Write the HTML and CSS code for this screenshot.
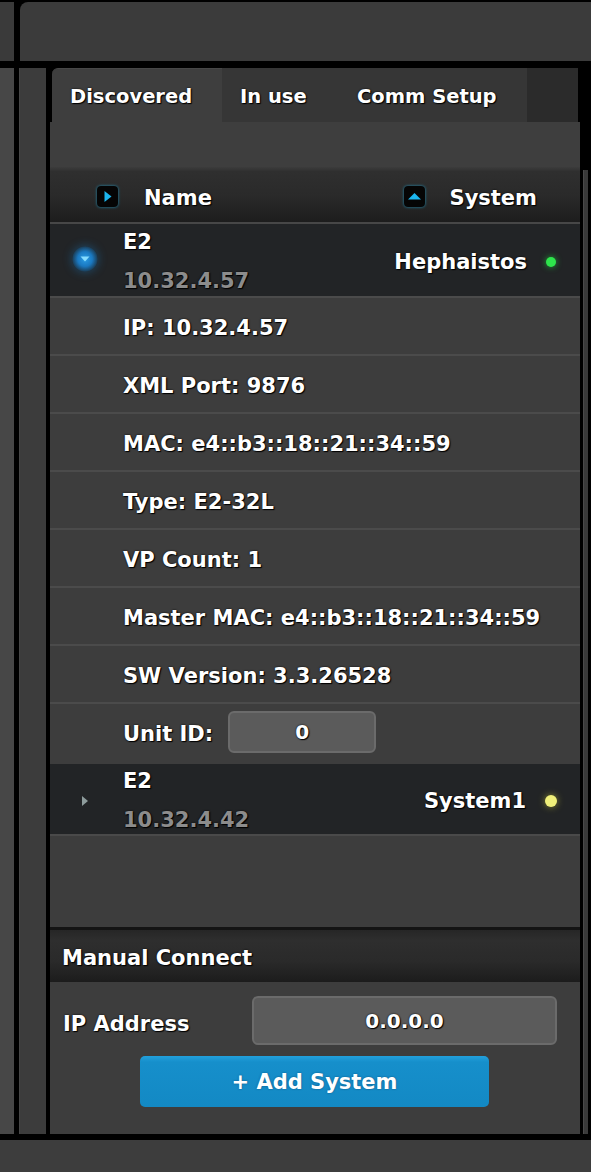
FILE: index.html
```html
<!DOCTYPE html>
<html lang="en">

<head>
    <meta charset="UTF-8">
    <meta name="viewport" content="width=device-width, initial-scale=1.0">
    <title>Discovered Systems</title>
    <link rel="stylesheet" href="styles.css">
</head>

<body>
    <div class="app">
        <div class="topbar">
            <div class="top-stub"></div>
            <div class="top-main"></div>
        </div>

        <div class="workspace">
            <div class="rail rail-a"></div>
            <div class="rail rail-b"></div>

            <div class="panel">
                <div class="tabs">
                    <div class="tab tab-active">Discovered</div>
                    <div class="tab tab-use">In use</div>
                    <div class="tab tab-comm">Comm Setup</div>
                    <div class="tab-rest"></div>
                </div>
                <div class="tab-gap"></div>

                <div class="list-head">
                    <div class="sort sort-name">
                        <span class="sort-btn">
                            <svg viewBox="0 0 21 21">
                                <path d="M7.5,5 L14.5,10.5 L7.5,16 Z" fill="#1cb6ee"></path>
                            </svg>
                        </span>
                        Name
                    </div>
                    <div class="sort sort-system">
                        <span class="sort-btn">
                            <svg viewBox="0 0 21 21">
                                <path d="M4,13.5 L10.5,7 L17,13.5 Z" fill="#1cb6ee"></path>
                            </svg>
                        </span>
                        System
                    </div>
                </div>

                <div class="device device-open">
                    <div class="expand expand-open">
                        <svg viewBox="0 0 26 26">
                            <path d="M8.5,10.5 L17.5,10.5 L13,15.5 Z" fill="#86dcff"></path>
                        </svg>
                    </div>
                    <div class="device-name">
                        <div>E2</div>
                        <div class="device-ip">10.32.4.57</div>
                    </div>
                    <div class="device-system">Hephaistos</div>
                    <span class="led led-green"></span>
                </div>

                <div class="details">
                    <div class="detail">IP: 10.32.4.57</div>
                    <div class="detail">XML Port: 9876</div>
                    <div class="detail">MAC: e4::b3::18::21::34::59</div>
                    <div class="detail">Type: E2-32L</div>
                    <div class="detail">VP Count: 1</div>
                    <div class="detail">Master MAC: e4::b3::18::21::34::59</div>
                    <div class="detail">SW Version: 3.3.26528</div>
                    <div class="detail">
                        Unit ID:
                        <div class="field unit-field">0</div>
                    </div>
                </div>

                <div class="device device-closed">
                    <div class="expand">
                        <svg viewBox="0 0 26 26">
                            <path d="M10,8 L16,13 L10,18 Z" fill="#8e9c9c"></path>
                        </svg>
                    </div>
                    <div class="device-name">
                        <div>E2</div>
                        <div class="device-ip">10.32.4.42</div>
                    </div>
                    <div class="device-system">System1</div>
                    <span class="led led-yellow"></span>
                </div>

                <div class="filler"></div>

                <div class="section-head">Manual Connect</div>
                <div class="manual">
                    <div class="ip-row">
                        <span>IP Address</span>
                        <div class="field ip-field">0.0.0.0</div>
                    </div>
                    <div class="add-btn">+ Add System</div>
                </div>
            </div>

            <div class="scroll">
                <div class="scroll-thumb"></div>
            </div>
        </div>

        <div class="statusbar"></div>
    </div>
</body>

</html>
```

FILE: styles.css
```css
* {
    box-sizing: border-box;
    font-family: "DejaVu Sans", Verdana, sans-serif;
    font-weight: 700;
}

html,
body {
    width: 591px;
    height: 1172px;
    margin: 0;
    padding: 0;
    background: #000;
    overflow: hidden;
}

.app {
    display: flex;
    flex-direction: column;
    height: 1172px;
    color: #fff;
    text-shadow: 0 0 2px #000, 1px 1px 1px #000;
}

/* top strip */

.topbar {
    display: flex;
    height: 59px;
    margin-top: 2px;
}

.top-stub {
    width: 14px;
    background: #3a3a3a;
}

.top-main {
    flex: 1;
    margin-left: 6px;
    background: #3b3b3b;
    border-top-left-radius: 8px;
}

/* main area */

.workspace {
    display: flex;
    height: 1066px;
    margin-top: 7px;
}

.rail {
    height: 100%;
}

.rail-a {
    width: 14px;
    background: #474747;
}

.rail-b {
    width: 27px;
    margin-left: 5px;
    background: #3c3c3c;
    border-left: 1px solid #474747;
}

.panel {
    display: flex;
    flex-direction: column;
    width: 530px;
    margin-left: 4px;
    background: #3d3d3d;
}

.scroll {
    width: 11px;
}

.scroll-thumb {
    width: 5px;
    height: 964px;
    margin: 102px 0 0 3px;
    background: #3a3a3a;
    border-left: 1px solid #4a4a4a;
}

/* tabs */

.tabs {
    display: flex;
    height: 54px;
    background: #000;
    font-size: 19.5px;
}

.tab {
    display: flex;
    align-items: center;
    padding: 2px 0 0 18px;
    background: #363636;
}

.tab-active {
    width: 170px;
    margin-left: 2px;
    background: #3e3e3e;
    border-top-left-radius: 6px;
    border-top: 1px solid #474747;
}

.tab-use {
    width: 117px;
}

.tab-comm {
    width: 188px;
}

.tab-rest {
    flex: 1;
    margin-right: 2px;
    background: #2b2b2b;
}

.tab-gap {
    height: 45px;
    background: #3e3e3e;
}

/* list header */

.list-head {
    display: flex;
    align-items: center;
    justify-content: space-between;
    height: 57px;
    padding: 4px 43px 0 47px;
    font-size: 21px;
    background: linear-gradient(#3c3c3c 0, #2f2f2f 8%, #2a2a2a 50%, #1d1d1d 96%, #474747 96%);
}

.sort {
    display: flex;
    align-items: center;
    gap: 26px;
}

.sort-system {
    gap: 25px;
}

.sort-btn {
    display: flex;
    width: 21px;
    height: 21px;
    margin-top: -3px;
    background: #050505;
    border-radius: 4px;
    box-shadow: 0 0 3px rgba(30, 170, 220, 0.8);
}

.sort-btn svg {
    width: 21px;
    height: 21px;
}

/* device rows */

.device {
    display: flex;
    align-items: center;
    padding: 0 24px 0 22px;
    background: #222426;
    font-size: 21px;
}

.device-open {
    height: 72px;
    padding-top: 3px;
}

.device-closed {
    height: 70px;
    padding-top: 4px;
}

.expand {
    display: flex;
    width: 26px;
    height: 26px;
    margin-right: 25px;
}

.expand svg {
    width: 26px;
    height: 26px;
}

.expand-open {
    margin-top: -6px;
    border-radius: 50%;
    background: radial-gradient(circle, #2a9ce6 0, #1a78c0 40%, rgba(20, 100, 160, 0.5) 65%, rgba(20, 90, 140, 0) 75%);
    box-shadow: 0 0 10px rgba(25, 120, 190, 0.45);
}

.device-name {
    display: flex;
    flex-direction: column;
    gap: 12px;
    line-height: 27px;
}

.device-ip {
    color: #8c8c8c;
}

.device-system {
    margin-left: auto;
    margin-right: 19px;
}

.led {
    width: 10px;
    height: 10px;
    border-radius: 50%;
}

.led-green {
    background: #2ee54c;
    box-shadow: 0 0 6px #1fa838;
}

.led-yellow {
    width: 12px;
    height: 12px;
    margin-right: -1px;
    background: #f0f07a;
    box-shadow: 0 0 7px #8a8a30;
}

/* detail list */

.details {
    padding-bottom: 4px;
}

.detail {
    display: flex;
    align-items: center;
    gap: 15px;
    height: 58px;
    padding: 4px 0 0 73px;
    border-top: 2px solid #4b4b4b;
    font-size: 21px;
}

.field {
    display: flex;
    align-items: center;
    justify-content: center;
    background: #5b5b5b;
    border: 2px solid #6b6b6b;
    border-radius: 6px;
}

.unit-field {
    width: 148px;
    height: 42px;
    margin-top: -4px;
    font-size: 20px;
}

.filler {
    height: 93px;
    border-top: 2px solid #4a4a4a;
}

/* manual connect */

.section-head {
    display: flex;
    align-items: center;
    height: 55px;
    padding: 4px 0 0 12px;
    font-size: 21px;
    border-top: 3px solid #141414;
    background: linear-gradient(#262626 0, #2e2e2e 20%, #2a2a2a 60%, #1c1c1c 100%);
}

.manual {
    height: 152px;
    padding: 14px 23px 0 13px;
    font-size: 21px;
}

.ip-row {
    display: flex;
    align-items: center;
    justify-content: space-between;
}

.ip-row span {
    padding-top: 6px;
}

.ip-field {
    width: 305px;
    height: 49px;
    font-size: 20px;
}

.add-btn {
    display: flex;
    align-items: center;
    justify-content: center;
    width: 349px;
    height: 51px;
    margin: 11px 0 0 77px;
    background: linear-gradient(#22a0dc 0, #168fcb 12%, #1389c4 100%);
    border-radius: 5px;
    text-shadow: 0 0 2px rgba(0, 40, 80, 0.6);
}

.statusbar {
    height: 32px;
    margin-top: 6px;
    background: #3d3d3d;
}
```
